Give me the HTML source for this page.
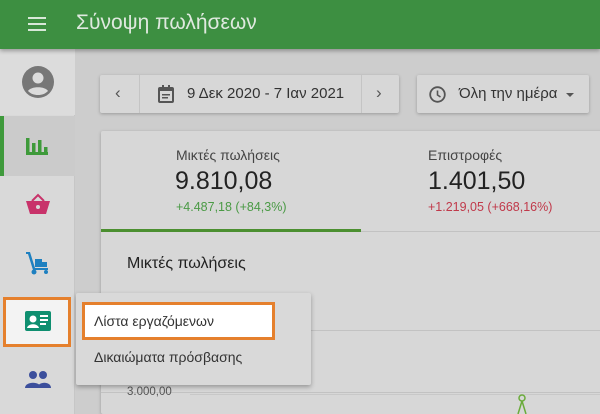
<!DOCTYPE html>
<html style="overflow:hidden;width:600px;height:414px"><head><meta charset="utf-8"><style>
*{margin:0;padding:0;box-sizing:border-box}
body{width:600px;height:414px;overflow:hidden;background:#cdcdcd;font-family:"Liberation Sans",sans-serif;position:relative;color:#222}
.a{position:absolute}
.hdr{left:0;top:0;width:600px;height:49px;background:#3d8f41;box-shadow:0 2px 4px rgba(0,0,0,.3);z-index:3}
.side{left:0;top:49px;width:75px;height:365px;background:#d9d9d9;border-right:1px solid #c6c6c6}
.box{background:#d7d7d7;box-shadow:0 1px 3px rgba(0,0,0,.25);border-radius:2px}
.t{white-space:nowrap}
</style></head><body>
<div class="a hdr">
 <div class="a" style="left:28px;top:17px;width:18px;height:2px;background:#d8e8d8;box-shadow:0 6px 0 #d8e8d8,0 12px 0 #d8e8d8"></div>
 <div class="a t" style="left:76px;top:11px;font-size:21px;color:#dfe9df">Σύνοψη πωλήσεων</div>
</div>
<div class="a side"></div>
<div class="a" style="left:0;top:49px;width:75px;height:66px;background:#dcdcdc"></div>
<svg class="a" style="left:22px;top:66px" width="32" height="32" viewBox="0 0 32 32"><circle cx="16" cy="16" r="16" fill="#777"/><circle cx="16" cy="12" r="5.5" fill="#dcdcdc"/><path d="M6 25c3-5 17-5 20 0c-3 3-6 4-10 4s-7-1-10-4z" fill="#dcdcdc"/></svg>
<div class="a" style="left:0;top:116px;width:75px;height:60px;background:#cbcbcb"></div>
<div class="a" style="left:0;top:116px;width:4px;height:60px;background:#3f9a3c"></div>
<svg class="a" style="left:26px;top:137px" width="24" height="20"><g fill="#3e9a3a"><rect x="0" y="1" width="3.5" height="17"/><rect x="0" y="15" width="22" height="3"/><rect x="6" y="6" width="3.5" height="12"/><rect x="12" y="3" width="3.5" height="15"/><rect x="18" y="10" width="3.5" height="8"/></g></svg>
<svg class="a" style="left:26px;top:193px" width="24" height="22"><path d="M6 8L12 2L18 8" stroke="#c8336a" stroke-width="2" fill="none"/><path d="M0 8H24L20 21H4Z" fill="#c8336a"/><circle cx="12" cy="14" r="2" fill="#d9d9d9"/></svg>
<svg class="a" style="left:24px;top:250px" width="28" height="26"><g fill="#1e80c0"><path d="M2 2h4l5 16h13v2H9L4 4H2z"/><rect x="11" y="9" width="7" height="8"/><rect x="17" y="12" width="6" height="5"/><circle cx="10" cy="22" r="2.5"/><circle cx="22" cy="22" r="2"/></g></svg>
<div class="a" style="left:3px;top:297px;width:68px;height:50px;border:3px solid #e5802d;background:#f3f3f3"></div>
<svg class="a" style="left:25px;top:311px" width="26" height="20"><rect width="26" height="20" rx="2" fill="#0f8f70"/><circle cx="8" cy="8" r="3.5" fill="#fff"/><path d="M2 17c1-5 11-5 12 0z" fill="#fff"/><rect x="15" y="4" width="8" height="2" fill="#fff"/><rect x="15" y="8" width="8" height="2" fill="#fff"/><rect x="15" y="12" width="6" height="2" fill="#fff"/></svg>
<svg class="a" style="left:25px;top:370px" width="26" height="18"><g fill="#3c4f9c"><circle cx="8" cy="5" r="4"/><circle cx="18" cy="5" r="4"/><path d="M0 18c0-7 16-7 16 0z"/><path d="M12 18c1-7 14-7 14 0z"/></g></svg>

<div class="a box" style="left:100px;top:75px;width:299px;height:38px"></div>
<div class="a" style="left:139px;top:75px;width:1px;height:38px;background:#c4c4c4"></div>
<div class="a" style="left:361px;top:75px;width:1px;height:38px;background:#c4c4c4"></div>
<div class="a t" style="left:115px;top:83px;font-size:17px;color:#555">‹</div>
<div class="a t" style="left:376px;top:83px;font-size:17px;color:#555">›</div>
<svg class="a" style="left:158px;top:85px" width="16" height="18"><rect x="1" y="3" width="14" height="14" rx="1" fill="none" stroke="#555" stroke-width="2"/><rect x="1" y="3" width="14" height="3" fill="#555"/><rect x="4" y="0" width="2" height="4" fill="#555"/><rect x="10" y="0" width="2" height="4" fill="#555"/><rect x="4" y="9" width="8" height="1.5" fill="#555"/><rect x="4" y="12" width="6" height="1.5" fill="#555"/></svg>
<div class="a t" style="left:187px;top:85px;font-size:15px;color:#333">9 Δεκ 2020 - 7 Ιαν 2021</div>
<div class="a box" style="left:417px;top:75px;width:172px;height:38px"></div>
<svg class="a" style="left:429px;top:86px" width="17" height="17"><circle cx="8.5" cy="8.5" r="7.3" fill="none" stroke="#555" stroke-width="1.8"/><path d="M8.5 4.5v4.5l3 2" stroke="#555" stroke-width="1.6" fill="none"/></svg>
<div class="a t" style="left:459px;top:85px;font-size:15px;color:#333">Όλη την ημέρα</div>
<div class="a" style="left:566px;top:93px;border:4px solid transparent;border-top:4px solid #555"></div>

<div class="a box" style="left:101px;top:131px;width:510px;height:283px"></div>
<div class="a t" style="left:176px;top:147px;font-size:14px;color:#444">Μικτές πωλήσεις</div>
<div class="a t" style="left:175px;top:167px;font-size:25px;color:#222">9.810,08</div>
<div class="a t" style="left:176px;top:200px;font-size:12.5px;color:#4a9a45">+4.487,18 (+84,3%)</div>
<div class="a t" style="left:428px;top:147px;font-size:14px;color:#444">Επιστροφές</div>
<div class="a t" style="left:428px;top:167px;font-size:25px;color:#222">1.401,50</div>
<div class="a t" style="left:428px;top:200px;font-size:12.5px;color:#c0394a">+1.219,05 (+668,16%)</div>
<div class="a" style="left:101px;top:231px;width:499px;height:1px;background:#c2c2c2"></div>
<div class="a" style="left:101px;top:229px;width:260px;height:3px;background:#4b8f30"></div>
<div class="a t" style="left:127px;top:255px;font-size:16px;color:#222">Μικτές πωλήσεις</div>
<div class="a" style="left:101px;top:330px;width:499px;height:1px;background:#c2c2c2"></div>
<div class="a" style="left:101px;top:392px;width:499px;height:1px;background:#c2c2c2"></div>
<div class="a t" style="left:127px;top:386px;font-size:11.5px;color:#555">3.000,00</div>
<div class="a" style="left:190px;top:394px;width:410px;height:1px;background:#c8c8c8"></div>
<svg class="a" style="left:515px;top:393px" width="14" height="21"><circle cx="7" cy="5" r="3" fill="none" stroke="#6aab3a" stroke-width="1.5"/><path d="M7 8L3 21M7 8L11 21" stroke="#6aab3a" stroke-width="1.5"/></svg>

<div class="a" style="left:76px;top:293px;width:235px;height:92px;background:#d9d9d9;box-shadow:0 2px 5px rgba(0,0,0,.3);border-radius:2px"></div>
<div class="a" style="left:82px;top:302px;width:193px;height:38px;border:3px solid #e5802d;background:#fff"></div>
<div class="a t" style="left:94px;top:313px;font-size:14px;color:#333">Λίστα εργαζόμενων</div>
<div class="a t" style="left:94px;top:349px;font-size:14px;color:#333">Δικαιώματα πρόσβασης</div>
</body></html>
